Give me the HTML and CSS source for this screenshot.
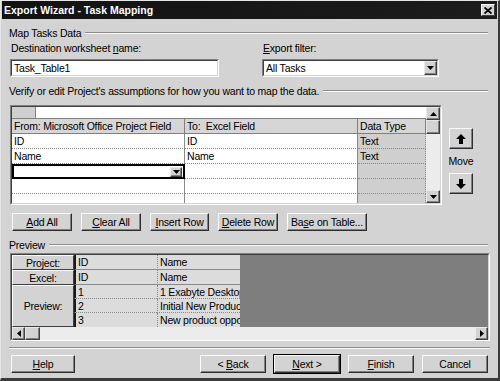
FILE: index.html
```html
<!DOCTYPE html>
<html>
<head>
<meta charset="utf-8">
<link rel="stylesheet" href="styles.css">
</head>
<body>
<div class="window">
  <div class="titlebar">
    <span class="title">Export Wizard - Task Mapping</span>
    <span class="close"><svg width="8" height="7" viewBox="0 0 8 7"><path d="M0.5 0.5 L7.5 6.5 M7.5 0.5 L0.5 6.5" stroke="#000" stroke-width="1.8"/></svg></span>
  </div>
  <div class="content">
    <div class="group-head top"><span>Map Tasks Data</span><i class="etch"></i></div>
    <div class="fields">
      <div class="field dest">
        <div class="label">Destination worksheet <u>n</u>ame:</div>
        <div class="sunken box-h"><div class="inner white"><span class="val">Task_Table1</span></div></div>
      </div>
      <div class="field filter">
        <div class="label"><u>E</u>xport filter:</div>
        <div class="sunken box-h"><div class="inner white combo"><span class="val">All Tasks</span><span class="sbtn drop"><svg width="7" height="4" viewBox="0 0 7 4"><path d="M0 0H7L3.5 4Z" fill="#000"/></svg></span></div></div>
      </div>
    </div>
    <div class="group-head verify"><span>Verify or edit Project's assumptions for how you want to map the data.</span><i class="etch"></i></div>
    <div class="map-area">
      <div class="sunken map-grid">
        <div class="inner map-inner">
          <div class="map-table">
            <div class="editbar"><span class="corner"></span></div>
            <div class="mrow head">
              <div class="c c1">From: Microsoft Office Project Field</div>
              <div class="c c2">To:&nbsp; Excel Field</div>
              <div class="c c3">Data Type</div>
            </div>
            <div class="mrow">
              <div class="c c1">ID</div><div class="c c2">ID</div><div class="c c3">Text</div>
            </div>
            <div class="mrow">
              <div class="c c1">Name</div><div class="c c2">Name</div><div class="c c3">Text</div>
            </div>
            <div class="mrow">
              <div class="c c1 editing"><span class="sbtn cellbtn"><svg width="7" height="4" viewBox="0 0 7 4"><path d="M0 0H7L3.5 4Z" fill="#000"/></svg></span></div><div class="c c2"></div><div class="c c3"></div>
            </div>
            <div class="mrow">
              <div class="c c1"></div><div class="c c2"></div><div class="c c3"></div>
            </div>
            <div class="mrow">
              <div class="c c1"></div><div class="c c2"></div><div class="c c3"></div>
            </div>
          </div>
          <div class="vscroll">
            <span class="sbtn arrow"><svg width="7" height="4" viewBox="0 0 7 4"><path d="M0 4H7L3.5 0Z" fill="#000"/></svg></span>
            <span class="sbtn thumb"></span>
            <span class="track"></span>
            <span class="sbtn arrow"><svg width="7" height="4" viewBox="0 0 7 4"><path d="M0 0H7L3.5 4Z" fill="#000"/></svg></span>
          </div>
        </div>
      </div>
      <div class="move">
        <button class="btn mv"><svg width="10" height="10" viewBox="0 0 10 10"><path d="M5 0L10 5H7V10H3V5H0Z" fill="#000"/></svg></button>
        <div class="move-label">Move</div>
        <button class="btn mv"><svg width="10" height="10" viewBox="0 0 10 10"><path d="M5 10L10 5H7V0H3V5H0Z" fill="#000"/></svg></button>
      </div>
    </div>
    <div class="actions">
      <button class="btn w60"><span><u>A</u>dd All</span></button>
      <button class="btn w60"><span><u>C</u>lear All</span></button>
      <button class="btn w59"><span><u>I</u>nsert Row</span></button>
      <button class="btn w60"><span><u>D</u>elete Row</span></button>
      <button class="btn w80"><span>Ba<u>s</u>e on Table...</span></button>
    </div>
    <div class="group-head preview-head"><span>Preview</span><i class="etch"></i></div>
    <div class="sunken preview">
      <div class="inner pv-inner">
        <div class="pv-grid">
          <div class="hc r1">Project:</div>
          <div class="dc id r1">ID</div>
          <div class="dc nm r1">Name</div>
          <div class="hc r2">Excel:</div>
          <div class="dc id r2">ID</div>
          <div class="dc nm r2">Name</div>
          <div class="hc r3">Preview:</div>
          <div class="dc id">1</div>
          <div class="dc nm">1 Exabyte Desktop</div>
          <div class="dc id">2</div>
          <div class="dc nm">Initial New Product</div>
          <div class="dc id last">3</div>
          <div class="dc nm last">New product oppo</div>
          <div class="dark"></div>
        </div>
        <div class="hscroll">
          <span class="sbtn harrow"><svg width="4" height="7" viewBox="0 0 4 7"><path d="M4 0V7L0 3.5Z" fill="#000"/></svg></span>
          <span class="sbtn hthumb"></span>
          <span class="htrack"></span>
          <span class="sbtn harrow"><svg width="4" height="7" viewBox="0 0 4 7"><path d="M0 0V7L4 3.5Z" fill="#000"/></svg></span>
        </div>
      </div>
    </div>
    <div class="separator"></div>
    <div class="footer">
      <button class="btn w64"><span><u>H</u>elp</span></button>
      <div class="nav">
        <button class="btn w66"><span>&lt; <u>B</u>ack</span></button>
        <button class="btn w66 default"><span><u>N</u>ext &gt;</span></button>
        <button class="btn w66"><span><u>F</u>inish</span></button>
        <button class="btn w66"><span>Cancel</span></button>
      </div>
    </div>
  </div>
</div>
</body>
</html>
```

FILE: styles.css
```css
html, body {
  margin: 0;
  padding: 0;
  background: #d3d3d3;
}
body {
  font-family: "Liberation Sans", Arial, sans-serif;
  font-size: 10.5px;
  letter-spacing: -0.2px;
  color: #000;
}
u { text-decoration: underline; text-underline-offset: 1px; }

.window {
  width: 500px;
  height: 381px;
  box-sizing: border-box;
  background: #d3d3d3;
  border-top: 1px solid #e6e6e6;
  border-left: 1px solid #e6e6e6;
  border-right: 2px solid #3a3a3a;
  border-bottom: 3px solid #3a3a3a;
  overflow: hidden;
}

.titlebar {
  height: 18px;
  margin: 0 1px;
  background: linear-gradient(90deg, #121212, #1c1c1c);
  display: flex;
  align-items: center;
  justify-content: space-between;
  padding: 0 2px 0 2px;
}
.title {
  color: #fff;
  font-weight: bold;
  font-size: 10.5px;
  letter-spacing: 0;
}
.close {
  width: 14px;
  height: 12px;
  box-sizing: border-box;
  background: #d3d3d3;
  border: 1px solid;
  border-color: #fff #404040 #404040 #fff;
  display: flex;
  align-items: center;
  justify-content: center;
}

.content {
  padding: 0 8px 0 9px;
}

.group-head {
  display: flex;
  align-items: center;
  height: 12px;
  line-height: 12px;
  margin-left: -1px;
}
.group-head .etch {
  flex: 1;
  height: 0;
  border-top: 1px solid #8c8c8c;
  border-bottom: 1px solid #fafafa;
  margin-left: 4px;
  margin-right: 2px;
}
.group-head.top { margin-top: 8px; }
.group-head.verify { margin-top: 8px; }
.group-head.preview-head { margin-top: 8px; }

.fields {
  display: flex;
  margin-top: 3px;
}
.field .label {
  height: 12px;
  line-height: 12px;
  margin-left: 1px;
  margin-bottom: 5px;
}
.field.dest { width: 209px; }
.field.filter { width: 177px; margin-left: 43px; }

.sunken {
  box-sizing: border-box;
  border: 1px solid;
  border-color: #808080 #fff #fff #808080;
}
.sunken > .inner {
  box-sizing: border-box;
  height: 100%;
  border: 1px solid;
  border-color: #404040 #d3d3d3 #d3d3d3 #404040;
}
.box-h { height: 18px; }
.inner.white {
  background: #fff;
  display: flex;
  align-items: center;
}
.val { padding-left: 2px; }
.combo { justify-content: space-between; }

.sbtn {
  box-sizing: border-box;
  background: #d3d3d3;
  border: 1px solid;
  border-color: #e8e8e8 #404040 #404040 #e8e8e8;
  box-shadow: inset -1px -1px 0 #808080;
  display: flex;
  align-items: center;
  justify-content: center;
}
.drop { width: 13px; height: 14px; }

.map-area {
  display: flex;
  align-items: flex-start;
  margin-top: 8px;
}
.map-grid {
  width: 432px;
  height: 100px;
}
.map-inner {
  display: flex;
  background: #fff;
  overflow: hidden;
}
.map-table {
  width: 414px;
  display: flex;
  flex-direction: column;
  overflow: hidden;
}
.editbar {
  height: 12px;
  flex: none;
  background: #fff;
  border-bottom: 1px solid #808080;
  box-sizing: border-box;
}
.corner {
  display: block;
  width: 24px;
  height: 11px;
  background: #cfcfcf;
  border-right: 1px solid #808080;
  box-sizing: border-box;
}
.mrow {
  display: grid;
  grid-template-columns: 173px 173px 68px;
  height: 15px;
  flex: none;
}
.c {
  box-sizing: border-box;
  height: 15px;
  line-height: 14px;
  padding-left: 2px;
  border-bottom: 1px dotted #8a8a8a;
  white-space: nowrap;
  overflow: hidden;
}
.c1, .c2 { background: #fff; border-right: 1px solid #8a8a8a; }
.c3 { background: #cfcfcf; border-right: 1px dotted #8a8a8a; }
.head .c {
  background: #d6d6d6;
  border-bottom: 1px solid #808080;
  border-right: 1px solid #808080;
  line-height: 14px;
}
.editing {
  border: 2px solid #000;
  display: flex;
  align-items: center;
  justify-content: flex-end;
  padding-right: 1px;
}
.cellbtn { width: 12px; height: 10px; }

.vscroll {
  width: 14px;
  display: flex;
  flex-direction: column;
}
.vscroll .arrow { width: 14px; height: 13px; flex: none; }
.vscroll .thumb { width: 14px; height: 14px; flex: none; }
.vscroll .track { flex: 1; background: #ececec; }

.move {
  margin-left: 7px;
  margin-top: 23px;
  display: flex;
  flex-direction: column;
  align-items: center;
  width: 24px;
}
.move-label {
  height: 24px;
  line-height: 24px;
  margin: 0 -4px;
}

.btn {
  box-sizing: border-box;
  height: 18px;
  padding: 0;
  margin: 0;
  font: inherit;
  letter-spacing: inherit;
  color: #000;
  background: #d3d3d3;
  border: 1px solid;
  border-color: #fafafa #2e2e2e #2e2e2e #fafafa;
  box-shadow: inset -1px -1px 0 #808080;
  border-radius: 0;
  display: flex;
  align-items: center;
  justify-content: center;
  white-space: pre;
}
.btn.mv { width: 24px; height: 21px; }
.w59 { width: 59px; }
.w60 { width: 60px; }
.w64 { width: 64px; }
.w66 { width: 66px; }
.w80 { width: 80px; }
.btn.default { box-shadow: inset -1px -1px 0 #808080, 0 0 0 1px #000; }

.actions {
  display: flex;
  gap: 9px;
  margin-top: 8px;
  margin-left: 2px;
}

.preview {
  margin-top: 2px;
  height: 88px;
}
.pv-inner {
  display: flex;
  flex-direction: column;
  background: #d3d3d3;
}
.pv-grid {
  display: grid;
  grid-template-columns: 62px 83px 83px 1fr;
  grid-template-rows: 15px 15px 14px 14px 14px;
}
.hc {
  grid-column: 1;
  box-sizing: border-box;
  background: #d3d3d3;
  border: 1px solid;
  border-color: #fafafa #404040 #404040 #fafafa;
  display: flex;
  align-items: center;
  justify-content: center;
}
.hc.r1 { grid-row: 1; }
.hc.r2 { grid-row: 2; }
.hc.r3 { grid-row: 3 / span 3; }
.dc {
  box-sizing: border-box;
  background: #dcdcdc;
  border-bottom: 1px dotted #8a8a8a;
  padding-left: 2px;
  line-height: 14px;
  white-space: nowrap;
  overflow: hidden;
}
.dc.r1, .dc.r2 { border-bottom: 1px solid #8a8a8a; line-height: 15px; }
.dc.id { grid-column: 2; border-left: 2px solid #1a1a1a; }
.dc.nm { grid-column: 3; border-left: 1px dotted #8a8a8a; }
.dc.last { border-bottom: none; }
.dark {
  grid-column: 4;
  grid-row: 1 / span 5;
  background: #7e7e7e;
}
.hscroll {
  height: 13px;
  display: flex;
}
.harrow { width: 13px; height: 13px; flex: none; }
.hthumb { width: 15px; height: 13px; flex: none; }
.htrack { flex: 1; background: #ececec; }

.separator {
  margin-top: 6px;
  margin-left: -1px;
  margin-right: 0;
  border-top: 1px solid #8c8c8c;
  border-bottom: 1px solid #fafafa;
}
.footer {
  display: flex;
  justify-content: space-between;
  margin-top: 6px;
  margin-left: 1px;
  margin-right: 2px;
}
.nav {
  display: flex;
  gap: 8px;
}
```
